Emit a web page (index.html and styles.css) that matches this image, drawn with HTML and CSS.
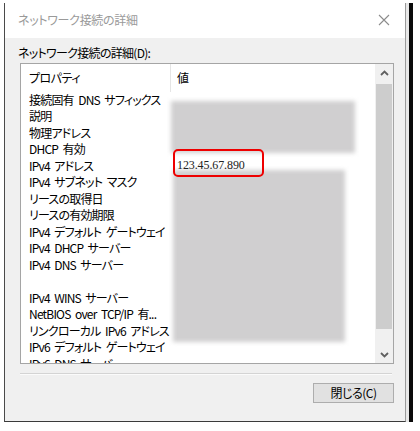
FILE: index.html
```html
<!DOCTYPE html>
<html lang="ja">
<head>
<meta charset="utf-8">
<link rel="stylesheet" href="styles.css">
</head>
<body>
<div class="screen">
  <div class="window">
    <div class="titlebar">
      <span class="title">ネットワーク接続の詳細</span>
      <svg class="close" width="12" height="12" viewBox="0 0 12 12"><path d="M1 1L11 11M11 1L1 11" stroke="#8c8c8c" stroke-width="1.1" fill="none"/></svg>
    </div>
    <div class="content">
      <div class="group-label">ネットワーク接続の詳細(D):</div>
      <div class="listbox">
        <div class="list">
          <div class="header">
            <div class="hcell">プロパティ</div>
            <div class="hcell hval">値</div>
          </div>
          <div class="rows">
            <div class="row"><span class="prop">接続固有 DNS サフィックス</span><span class="val"></span></div>
            <div class="row"><span class="prop">説明</span><span class="val"></span></div>
            <div class="row"><span class="prop">物理アドレス</span><span class="val"></span></div>
            <div class="row"><span class="prop">DHCP 有効</span><span class="val"></span></div>
            <div class="row"><span class="prop">IPv4 アドレス</span><span class="val ip">123.45.67.890</span></div>
            <div class="row"><span class="prop">IPv4 サブネット マスク</span><span class="val"></span></div>
            <div class="row"><span class="prop">リースの取得日</span><span class="val"></span></div>
            <div class="row"><span class="prop">リースの有効期限</span><span class="val"></span></div>
            <div class="row"><span class="prop">IPv4 デフォルト ゲートウェイ</span><span class="val"></span></div>
            <div class="row"><span class="prop">IPv4 DHCP サーバー</span><span class="val"></span></div>
            <div class="row"><span class="prop">IPv4 DNS サーバー</span><span class="val"></span></div>
            <div class="row"><span class="prop"></span><span class="val"></span></div>
            <div class="row"><span class="prop">IPv4 WINS サーバー</span><span class="val"></span></div>
            <div class="row"><span class="prop">NetBIOS over TCP/IP 有...</span><span class="val"></span></div>
            <div class="row"><span class="prop">リンクローカル IPv6 アドレス</span><span class="val"></span></div>
            <div class="row"><span class="prop">IPv6 デフォルト ゲートウェイ</span><span class="val"></span></div>
            <div class="row"><span class="prop">IPv6 DNS サーバー</span><span class="val"></span></div>
          </div>
          <div class="redact redact-1"></div>
          <div class="redact redact-2"></div>
          <div class="highlight"></div>
        </div>
        <div class="scrollbar">
          <div class="sb-btn"><svg width="9" height="6" viewBox="0 0 9 6"><path d="M1 5L4.5 1.5L8 5" stroke="#606060" stroke-width="1.8" fill="none"/></svg></div>
          <div class="sb-track"><div class="sb-thumb"></div></div>
          <div class="sb-btn"><svg width="9" height="6" viewBox="0 0 9 6"><path d="M1 1L4.5 4.5L8 1" stroke="#606060" stroke-width="1.8" fill="none"/></svg></div>
        </div>
      </div>
      <div class="separator"></div>
      <div class="footer">
        <button class="btn">閉じる(C)</button>
      </div>
    </div>
  </div>
  <div class="gap"></div>
  <div class="backdrop"></div>
</div>
</body>
</html>
```
FILE: styles.css
```css
* { box-sizing: border-box; }
html, body { margin: 0; padding: 0; background: #ffffff; }
body {
  width: 420px;
  height: 431px;
  overflow: hidden;
  font-family: "Noto Sans CJK JP", "Liberation Sans", sans-serif;
  font-size: 12px;
  color: #000;
  font-feature-settings: "palt";
}
.screen {
  display: flex;
  padding: 3px 0 0 4px;
  height: 422px;
}
.window {
  width: 402px;
  height: 419px;
  border-left: 1px solid #4a4a4a;
  border-right: 1px solid #9a9a9a;
  border-bottom: 1px solid #3a3a3a;
  background: #f0f0f0;
  display: flex;
  flex-direction: column;
}
.titlebar {
  height: 35px;
  background: #fff;
  display: flex;
  align-items: center;
  justify-content: space-between;
  padding: 0 15px 2px 13px;
}
.title {
  color: #9a9a9a;
  font-size: 12px;
  letter-spacing: -0.3px;
}
.close { display: block; }
.content {
  flex: 1;
  display: flex;
  flex-direction: column;
  padding: 8px 12px 0 13px;
}
.group-label {
  line-height: 14px;
  height: 17px;
  letter-spacing: -0.7px;
}
.listbox {
  margin-left: 2px;
  width: 374px;
  height: 301px;
  border: 1px solid #a5a5a5;
  background: #fff;
  display: flex;
}
.list {
  position: relative;
  flex: 1;
  overflow: hidden;
}
.header {
  display: grid;
  grid-template-columns: 149px 1fr;
  height: 28px;
}
.hcell {
  display: flex;
  align-items: center;
  padding-left: 8px;
  padding-bottom: 2px;
  letter-spacing: -0.5px;
}
.hval {
  border-left: 1px solid #e5e5e5;
  padding-left: 6px;
}
.rows { display: flex; flex-direction: column; }
.row {
  display: grid;
  grid-template-columns: 149px 1fr;
  height: 16.47px;
  line-height: 16.47px;
  white-space: nowrap;
}
.prop { padding-left: 8px; letter-spacing: -0.8px; word-spacing: 2.5px; }
.val { padding-left: 7px; }
.ip {
  position: relative;
  z-index: 1;
  font-family: "Liberation Serif", serif;
  font-size: 12px;
  line-height: 14px;
  padding-top: 0;
  color: #222;
  letter-spacing: -0.1px;
}
.redact {
  position: absolute;
  background: #d0cfd0;
  filter: blur(2px);
}
.redact-1 { left: 150px; top: 37px; width: 184px; height: 52px; }
.redact-2 { left: 152px; top: 106px; width: 172px; height: 172px; }
.highlight {
  position: absolute;
  z-index: 2;
  left: 152px;
  top: 85px;
  width: 91px;
  height: 28px;
  border: 2.5px solid #ee0000;
  border-radius: 5px;
}
.scrollbar {
  width: 18px;
  background: #f0f0f0;
  display: flex;
  flex-direction: column;
}
.sb-btn {
  height: 17px;
  display: flex;
  align-items: center;
  justify-content: center;
}
.sb-track {
  flex: 1;
  padding: 3px 1px 17px 1px;
}
.sb-thumb {
  height: 100%;
  background: #cdcdcd;
}
.separator {
  margin: 9px 2px 0 2px;
  height: 2px;
  width: 372px;
  background: #d4d4d4;
  border-bottom: 1px solid #fbfbfb;
}
.footer {
  display: flex;
  justify-content: flex-end;
  padding-top: 8px;
  width: 376px;
}
.btn {
  width: 81px;
  height: 20px;
  border: 1px solid #adadad;
  background: #e1e1e1;
  font-family: "Noto Sans CJK JP", "Liberation Sans", sans-serif;
  font-feature-settings: "palt";
  font-size: 12px;
  letter-spacing: -0.5px;
  color: #000;
  padding: 0;
  line-height: 16px;
}
.gap {
  width: 3px;
  height: 419px;
  background: #e8e8e8;
}
.backdrop {
  width: 4px;
  height: 419px;
  background: #0a0a0a;
}
```
